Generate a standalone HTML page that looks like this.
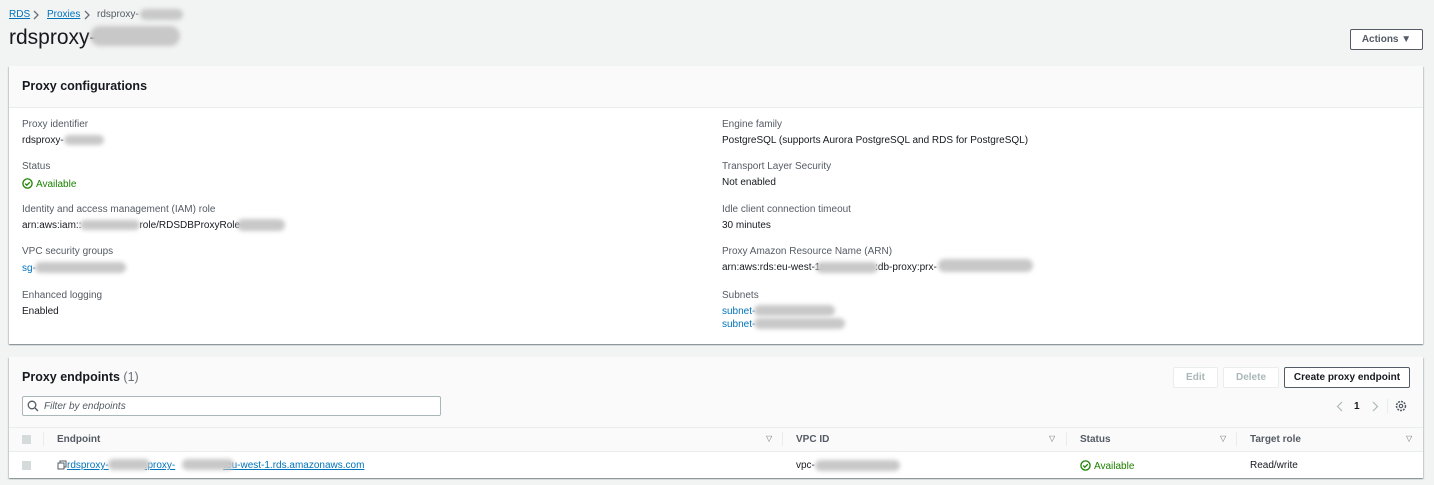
<!DOCTYPE html><html><head><style>
body{margin:0;width:1434px;height:485px;background:#f2f3f3;font-family:"Liberation Sans",sans-serif;font-size:10px;color:#16191f;position:relative;overflow:hidden}
.a{position:absolute;white-space:nowrap}
.lnk{color:#0073bb}
.u{text-decoration:underline}
.blur{position:absolute;background:#c8c8c8;border-radius:8px;filter:blur(2px)}
.lbl{color:#545b64}
.panel{position:absolute;background:#fff;box-shadow:0 1px 1px rgba(0,28,36,.3),1px 1px 1px rgba(0,28,36,.15),-1px 1px 1px rgba(0,28,36,.15)}
.btn{position:absolute;border:1px solid #aab7b8;border-radius:2px;background:#fff;font-weight:bold;text-align:center;box-sizing:border-box}
.g{color:#1d8102}
.b{font-weight:bold}
.ok{display:inline-block;vertical-align:-2px;margin-right:3px}
</style></head><body>
<div class="a lnk u" style="left:9px;top:9px">RDS</div>
<svg class="a" style="left:33px;top:10px" width="6" height="10"><path d="M1 1l4 4-4 4" fill="none" stroke="#687078" stroke-width="1.3"/></svg>
<div class="a lnk u" style="left:47px;top:9px">Proxies</div>
<svg class="a" style="left:84px;top:10px" width="6" height="10"><path d="M1 1l4 4-4 4" fill="none" stroke="#687078" stroke-width="1.3"/></svg>
<div class="a" style="left:97px;top:9px;color:#545b64">rdsproxy-</div>
<div class="blur" style="left:140px;top:9px;width:43px;height:11px"></div>
<div class="a" style="left:9px;top:26px;font-size:21px">rdsproxy-</div>
<div class="blur" style="left:90px;top:26px;width:90px;height:20px;border-radius:10px"></div>
<div class="btn" style="left:1350px;top:29px;width:73px;height:21px;line-height:19px;border-color:#545b64;color:#545b64">Actions ▼</div>

<div class="panel" style="left:9px;top:66px;width:1414px;height:278px">
<div style="height:41px;background:#fafafa;border-bottom:1px solid #eaeded"></div>
</div>
<div class="a b" style="left:22px;top:79px;font-size:12.5px">Proxy configurations</div>
<div class="a lbl" style="left:22px;top:119px">Proxy identifier</div>
<div class="a" style="left:22px;top:135px">rdsproxy-</div><div class="blur" style="left:64px;top:135px;width:40px;height:10px"></div>
<div class="a lbl" style="left:22px;top:161px">Status</div>
<div class="a g" style="left:22px;top:178px"><svg class="ok" width="11" height="11"><circle cx="5.5" cy="5.5" r="4.6" fill="none" stroke="#1d8102" stroke-width="1.3"/><path d="M3.2 5.6l1.6 1.6 3-3" fill="none" stroke="#1d8102" stroke-width="1.3"/></svg>Available</div>
<div class="a lbl" style="left:22px;top:204px">Identity and access management (IAM) role</div>
<div class="a" style="left:22px;top:220px">arn:aws:iam::<span style="display:inline-block;width:58px"></span>role/RDSDBProxyRole-</div>
<div class="blur" style="left:80px;top:220px;width:60px;height:10px"></div><div class="blur" style="left:237px;top:219px;width:48px;height:12px"></div>
<div class="a lbl" style="left:22px;top:246px">VPC security groups</div>
<div class="a lnk" style="left:22px;top:263px">sg-</div><div class="blur" style="left:35px;top:262px;width:91px;height:11px"></div>
<div class="a lbl" style="left:22px;top:290px">Enhanced logging</div>
<div class="a" style="left:22px;top:306px">Enabled</div>

<div class="a lbl" style="left:722px;top:119px">Engine family</div>
<div class="a" style="left:722px;top:135px">PostgreSQL (supports Aurora PostgreSQL and RDS for PostgreSQL)</div>
<div class="a lbl" style="left:722px;top:161px">Transport Layer Security</div>
<div class="a" style="left:722px;top:177px">Not enabled</div>
<div class="a lbl" style="left:722px;top:204px">Idle client connection timeout</div>
<div class="a" style="left:722px;top:220px">30 minutes</div>
<div class="a lbl" style="left:722px;top:246px">Proxy Amazon Resource Name (ARN)</div>
<div class="a" style="left:722px;top:262px">arn:aws:rds:eu-west-1:<span style="display:inline-block;width:52px"></span>:db-proxy:prx-</div>
<div class="blur" style="left:816px;top:262px;width:62px;height:11px"></div><div class="blur" style="left:938px;top:259px;width:95px;height:13px"></div>
<div class="a lbl" style="left:722px;top:290px">Subnets</div>
<div class="a lnk" style="left:722px;top:306px">subnet-</div><div class="blur" style="left:754px;top:305px;width:81px;height:11px"></div>
<div class="a lnk" style="left:722px;top:319px">subnet-</div><div class="blur" style="left:754px;top:318px;width:91px;height:11px"></div>

<div class="panel" style="left:9px;top:357px;width:1414px;height:121px">
<div style="height:70px;background:#fafafa"></div>
<div style="height:25px;background:#fafafa;border-top:1px solid #eaeded;border-bottom:1px solid #eaeded;box-sizing:border-box"></div>
</div>
<div class="a b" style="left:22px;top:370px;font-size:12.5px">Proxy endpoints <span style="font-weight:normal;color:#687078">(1)</span></div>
<div class="btn" style="left:1173px;top:367px;width:45px;height:21px;line-height:19px;color:#aab7b8;border-color:#eaeded">Edit</div>
<div class="btn" style="left:1223px;top:367px;width:56px;height:21px;line-height:19px;color:#aab7b8;border-color:#eaeded">Delete</div>
<div class="btn" style="left:1284px;top:367px;width:126px;height:21px;line-height:19px;color:#16191f;border-color:#545b64">Create proxy endpoint</div>
<div class="a" style="left:22px;top:396px;width:419px;height:20px;border:1px solid #aab7b8;background:#fff;box-sizing:border-box;border-radius:2px"></div>
<svg class="a" style="left:27px;top:400px" width="12" height="12"><circle cx="5" cy="5" r="3.8" fill="none" stroke="#545b64" stroke-width="1.3"/><path d="M8 8l3 3" stroke="#545b64" stroke-width="1.3"/></svg>
<div class="a" style="left:44px;top:401px;font-style:italic;color:#545b64">Filter by endpoints</div>
<svg class="a" style="left:1336px;top:401px" width="7" height="11"><path d="M6 1L1.5 5.5 6 10" fill="none" stroke="#aab7b8" stroke-width="1.2"/></svg>
<div class="a b" style="left:1354px;top:401px">1</div>
<svg class="a" style="left:1372px;top:401px" width="7" height="11"><path d="M1 1l4.5 4.5L1 10" fill="none" stroke="#aab7b8" stroke-width="1.2"/></svg>
<div class="a" style="left:1387px;top:399px;width:1px;height:14px;background:#eaeded"></div>
<svg class="a" style="left:1395px;top:400px" width="12" height="12"><circle cx="6" cy="6" r="4.5" fill="none" stroke="#545b64" stroke-width="1.5" stroke-dasharray="2 1"/><circle cx="6" cy="6" r="1.7" fill="none" stroke="#545b64" stroke-width="1.2"/></svg>

<div class="a" style="left:22px;top:435px;width:9px;height:9px;background:#d5dbdb"></div>
<div class="a" style="left:43px;top:432px;width:1px;height:14px;background:#eaeded"></div>
<div class="a b" style="left:57px;top:434px;color:#545b64">Endpoint</div>
<div class="a" style="left:766px;top:434px;color:#687078;font-size:8px">▽</div>
<div class="a" style="left:782px;top:432px;width:1px;height:14px;background:#eaeded"></div>
<div class="a b" style="left:796px;top:434px;color:#545b64">VPC ID</div>
<div class="a" style="left:1049px;top:434px;color:#687078;font-size:8px">▽</div>
<div class="a" style="left:1066px;top:432px;width:1px;height:14px;background:#eaeded"></div>
<div class="a b" style="left:1080px;top:434px;color:#545b64">Status</div>
<div class="a" style="left:1220px;top:434px;color:#687078;font-size:8px">▽</div>
<div class="a" style="left:1236px;top:432px;width:1px;height:14px;background:#eaeded"></div>
<div class="a b" style="left:1250px;top:434px;color:#545b64">Target role</div>
<div class="a" style="left:1406px;top:434px;color:#687078;font-size:8px">▽</div>

<div class="a" style="left:22px;top:461px;width:9px;height:9px;background:#d5dbdb"></div>
<svg class="a" style="left:57px;top:460px" width="10" height="10"><rect x="3" y="1" width="6" height="6" fill="none" stroke="#545b64"/><rect x="1" y="3" width="6" height="6" fill="#fff" stroke="#545b64"/></svg>
<div class="a lnk u" style="left:67px;top:460px">rdsproxy-<span style="display:inline-block;width:36px"></span>.proxy-<span style="display:inline-block;width:48px"></span>.eu-west-1.rds.amazonaws.com</div>
<div class="blur" style="left:108px;top:459px;width:42px;height:11px"></div><div class="blur" style="left:182px;top:459px;width:52px;height:11px"></div>
<div class="a" style="left:796px;top:460px">vpc-</div><div class="blur" style="left:815px;top:460px;width:85px;height:11px"></div>
<div class="a g" style="left:1080px;top:460px"><svg class="ok" width="11" height="11"><circle cx="5.5" cy="5.5" r="4.6" fill="none" stroke="#1d8102" stroke-width="1.3"/><path d="M3.2 5.6l1.6 1.6 3-3" fill="none" stroke="#1d8102" stroke-width="1.3"/></svg>Available</div>
<div class="a" style="left:1250px;top:460px">Read/write</div>
</body></html>
